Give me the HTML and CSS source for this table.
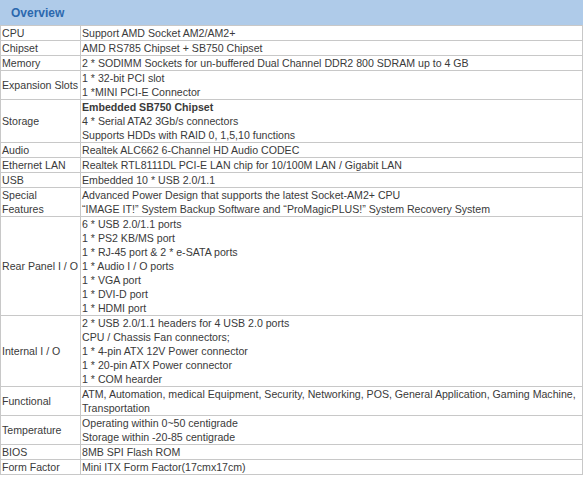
FILE: index.html
```html
<!DOCTYPE html>
<html>
<head>
<meta charset="utf-8">
<link rel="stylesheet" href="styles.css">
</head>
<body>
<div class="panel">
  <div class="head">Overview</div>
  <table class="spec">
    <colgroup><col class="c1"><col class="c2"></colgroup>
    <tr><td class="k">CPU</td><td>Support AMD Socket AM2/AM2+</td></tr>
    <tr><td class="k">Chipset</td><td>AMD RS785 Chipset + SB750 Chipset</td></tr>
    <tr><td class="k">Memory</td><td>2 * SODIMM Sockets for un-buffered Dual Channel DDR2 800 SDRAM up to 4 GB</td></tr>
    <tr><td class="k">Expansion Slots</td><td>1 * 32-bit PCI slot<br>1 *MINI PCI-E Connector</td></tr>
    <tr><td class="k">Storage</td><td><b>Embedded SB750 Chipset</b><br>4 * Serial ATA2 3Gb/s connectors<br>Supports HDDs with RAID 0, 1,5,10 functions</td></tr>
    <tr><td class="k">Audio</td><td>Realtek ALC662 6-Channel HD Audio CODEC</td></tr>
    <tr><td class="k">Ethernet LAN</td><td>Realtek RTL8111DL PCI-E LAN chip for 10/100M LAN / Gigabit LAN</td></tr>
    <tr><td class="k">USB</td><td>Embedded 10 * USB 2.0/1.1</td></tr>
    <tr><td class="k">Special<br>Features</td><td>Advanced Power Design that supports the latest Socket-AM2+ CPU<br>“IMAGE IT!” System Backup Software and “ProMagicPLUS!” System Recovery System</td></tr>
    <tr><td class="k">Rear Panel I / O</td><td>6 * USB 2.0/1.1 ports<br>1 * PS2 KB/MS port<br>1 * RJ-45 port &amp; 2 * e-SATA ports<br>1 * Audio I / O ports<br>1 * VGA port<br>1 * DVI-D port<br>1 * HDMI port</td></tr>
    <tr><td class="k">Internal I / O</td><td>2 * USB 2.0/1.1 headers for 4 USB 2.0 ports<br>CPU / Chassis Fan connectors;<br>1 * 4-pin ATX 12V Power connector<br>1 * 20-pin ATX Power connector<br>1 * COM hearder</td></tr>
    <tr><td class="k">Functional</td><td>ATM, Automation, medical Equipment, Security, Networking, POS, General Application, Gaming Machine, Transportation</td></tr>
    <tr><td class="k">Temperature</td><td>Operating within 0~50 centigrade<br>Storage within -20-85 centigrade</td></tr>
    <tr><td class="k">BIOS</td><td>8MB SPI Flash ROM</td></tr>
    <tr><td class="k">Form Factor</td><td>Mini ITX Form Factor(17cmx17cm)</td></tr>
  </table>
</div>
</body>
</html>
```
FILE: styles.css
```css
html, body {
  margin: 0;
  padding: 0;
  background: #ffffff;
}
.panel {
  width: 583px;
}
.head {
  height: 25px;
  background: #afcbe9;
  color: #2c68ae;
  font-family: "Liberation Sans", Arial, sans-serif;
  font-weight: bold;
  font-size: 12px;
  line-height: 26px;
  padding-left: 11px;
  box-sizing: border-box;
}
.spec {
  width: 583px;
  table-layout: fixed;
  border-collapse: collapse;
  font-family: "Liberation Sans", Arial, sans-serif;
  font-size: 10.6px;
  line-height: 14px;
  color: #3a3a3a;
}
.spec .c1 {
  width: 80px;
}
.spec td {
  border: 1px solid #c8c8c8;
  padding: 0 1px;
  vertical-align: middle;
  text-align: left;
}
.spec td.k {
  white-space: nowrap;
  overflow: hidden;
}
.spec b {
  font-weight: bold;
}
```
